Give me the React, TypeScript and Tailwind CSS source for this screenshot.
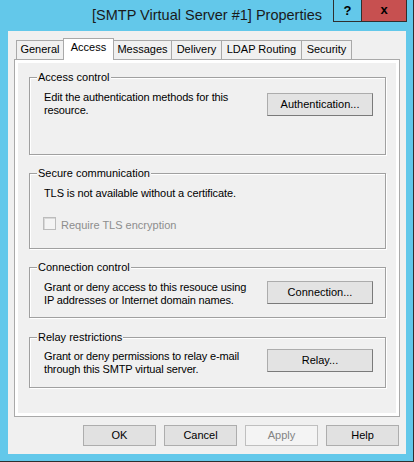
import React from "react";

const font = "font-['Liberation_Sans',Arial,sans-serif]";

function Tab({ label, w, selected, first }: { label: string; w: string; selected?: boolean; first?: boolean }) {
  if (selected) {
    return (
      <div
        className={`${w} ${first ? "" : "-ml-px"} h-[22px] relative z-10 bg-white border-t border-l border-r border-[#a9a9a9] flex justify-center items-start pt-[2px] text-[11px] leading-[13px] text-black`}
      >
        {label}
      </div>
    );
  }
  return (
    <div
      className={`${w} ${first ? "" : "-ml-px"} mt-[2px] h-[19px] bg-[#f0f0f0] border-t border-l border-r border-[#a9a9a9] flex justify-center items-start pt-[2px] text-[11px] leading-[13px] text-black`}
    >
      {label}
    </div>
  );
}

function Group({ title, className, children }: { title: string; className: string; children?: React.ReactNode }) {
  return (
    <div
      className={`relative w-[357px] border border-[#a0a0a0] shadow-[inset_1px_1px_0_#ffffff,1px_1px_0_#ffffff] ${className}`}
    >
      <span className="absolute left-[7px] -top-[7px] px-[1px] bg-[#f0f0f0] text-[11px] leading-[13px] text-black whitespace-nowrap">
        {title}
      </span>
      {children}
    </div>
  );
}

function ActionButton({ label, className = "" }: { label: string; className?: string }) {
  return (
    <div
      className={`w-[106px] h-[23px] shrink-0 bg-[#e3e3e3] border border-[#acacac] border-r-[#7a7a7a] border-b-[#7a7a7a] flex items-center justify-center text-[11px] leading-[13px] tracking-normal text-black ${className}`}
    >
      {label}
    </div>
  );
}

function DlgButton({ label, disabled }: { label: string; disabled?: boolean }) {
  return (
    <div
      className={`w-[73px] h-[21px] border flex items-center justify-center text-[11px] leading-[13px] ${
        disabled ? "bg-[#f4f4f4] border-[#bfbfbf] text-[#838383]" : "bg-[#e1e1e1] border-[#adadad] text-black"
      }`}
    >
      {label}
    </div>
  );
}

export default function App() {
  return (
    <div className={`w-[414px] h-[462px] bg-[#63c8ea] border-r border-b border-[#2f2f2f] flex flex-col ${font}`}>
      {/* Title bar */}
      <div className="relative h-[31px] shrink-0 flex items-start justify-center pt-[6px]">
        <span className="text-[14.5px] leading-[18px] text-[#1a1a1a] pl-[1px]">[SMTP Virtual Server #1] Properties</span>
        <div className="absolute right-[6px] top-0 flex h-[22px] border-l border-r border-b border-[#2f2f2f]">
          <div className="w-[28px] h-full flex items-center justify-center border-r border-[#2f2f2f] text-[13px] font-bold text-black">
            ?
          </div>
          <div className="w-[44px] h-full bg-[#c75050] flex items-center justify-center text-[13px] font-bold text-black leading-none pb-[2px]">
            x
          </div>
        </div>
      </div>

      {/* Client area */}
      <div className="ml-[8px] w-[398px] h-[423px] bg-[#f0f0f0] pt-[7px] flex flex-col">
        <div className="flex items-start h-[21px] pl-[8px]">
          <Tab label="General" w="w-[48px]" first />
          <Tab label="Access" w="w-[51px]" selected />
          <Tab label="Messages" w="w-[59px]" />
          <Tab label="Delivery" w="w-[51px]" />
          <Tab label="LDAP Routing" w="w-[81px]" />
          <Tab label="Security" w="w-[51px]" />
        </div>
        <div className="ml-[6px] w-[386px] h-[358px] bg-white border border-[#a9a9a9] p-[3px]">
          <div className="w-full h-full bg-[#f0f0f0] pt-[14px] pl-[11px] flex flex-col text-[11px] leading-[13px] text-black">
            <Group title="Access control" className="h-[78px]">
              <div className="flex items-start justify-between pt-[13px] pl-[14px] pr-[12px]">
                <div className="tracking-[-0.15px]">
                  Edit the authentication methods for this
                  <br />
                  resource.
                </div>
                <ActionButton label="Authentication..." className="mt-[2px]" />
              </div>
            </Group>

            <Group title="Secure communication" className="mt-[18px] h-[76px]">
              <div className="pt-[13px] pl-[14px] tracking-[-0.1px]">TLS is not available without a certificate.</div>
              <div className="flex items-start mt-[17px] pl-[13px]">
                <div className="w-[13px] h-[13px] border border-[#bcbcbc] bg-[#f4f4f4] shadow-[inset_1px_1px_0_#d8d8d8]" />
                <span className="ml-[5px] mt-[2px] text-[#8d8d8d]">Require TLS encryption</span>
              </div>
            </Group>

            <Group title="Connection control" className="mt-[18px] h-[51px]">
              <div className="flex items-start justify-between pt-[13px] pl-[14px] pr-[12px]">
                <div className="tracking-[-0.15px]">
                  Grant or deny access to this resouce using
                  <br />
                  IP addresses or Internet domain names.
                </div>
                <ActionButton label="Connection..." />
              </div>
            </Group>

            <Group title="Relay restrictions" className="mt-[19px] h-[51px]">
              <div className="flex items-start justify-between pt-[12px] pl-[14px] pr-[12px]">
                <div className="tracking-[-0.15px]">
                  Grant or deny permissions to relay e-mail
                  <br />
                  through this SMTP virtual server.
                </div>
                <ActionButton label="Relay..." className="-mt-[1px]" />
              </div>
            </Group>
          </div>
        </div>

        <div className="mt-[8px] flex justify-end gap-[8px] pr-[7px]">
          <DlgButton label="OK" />
          <DlgButton label="Cancel" />
          <DlgButton label="Apply" disabled />
          <DlgButton label="Help" />
        </div>
      </div>
    </div>
  );
}
